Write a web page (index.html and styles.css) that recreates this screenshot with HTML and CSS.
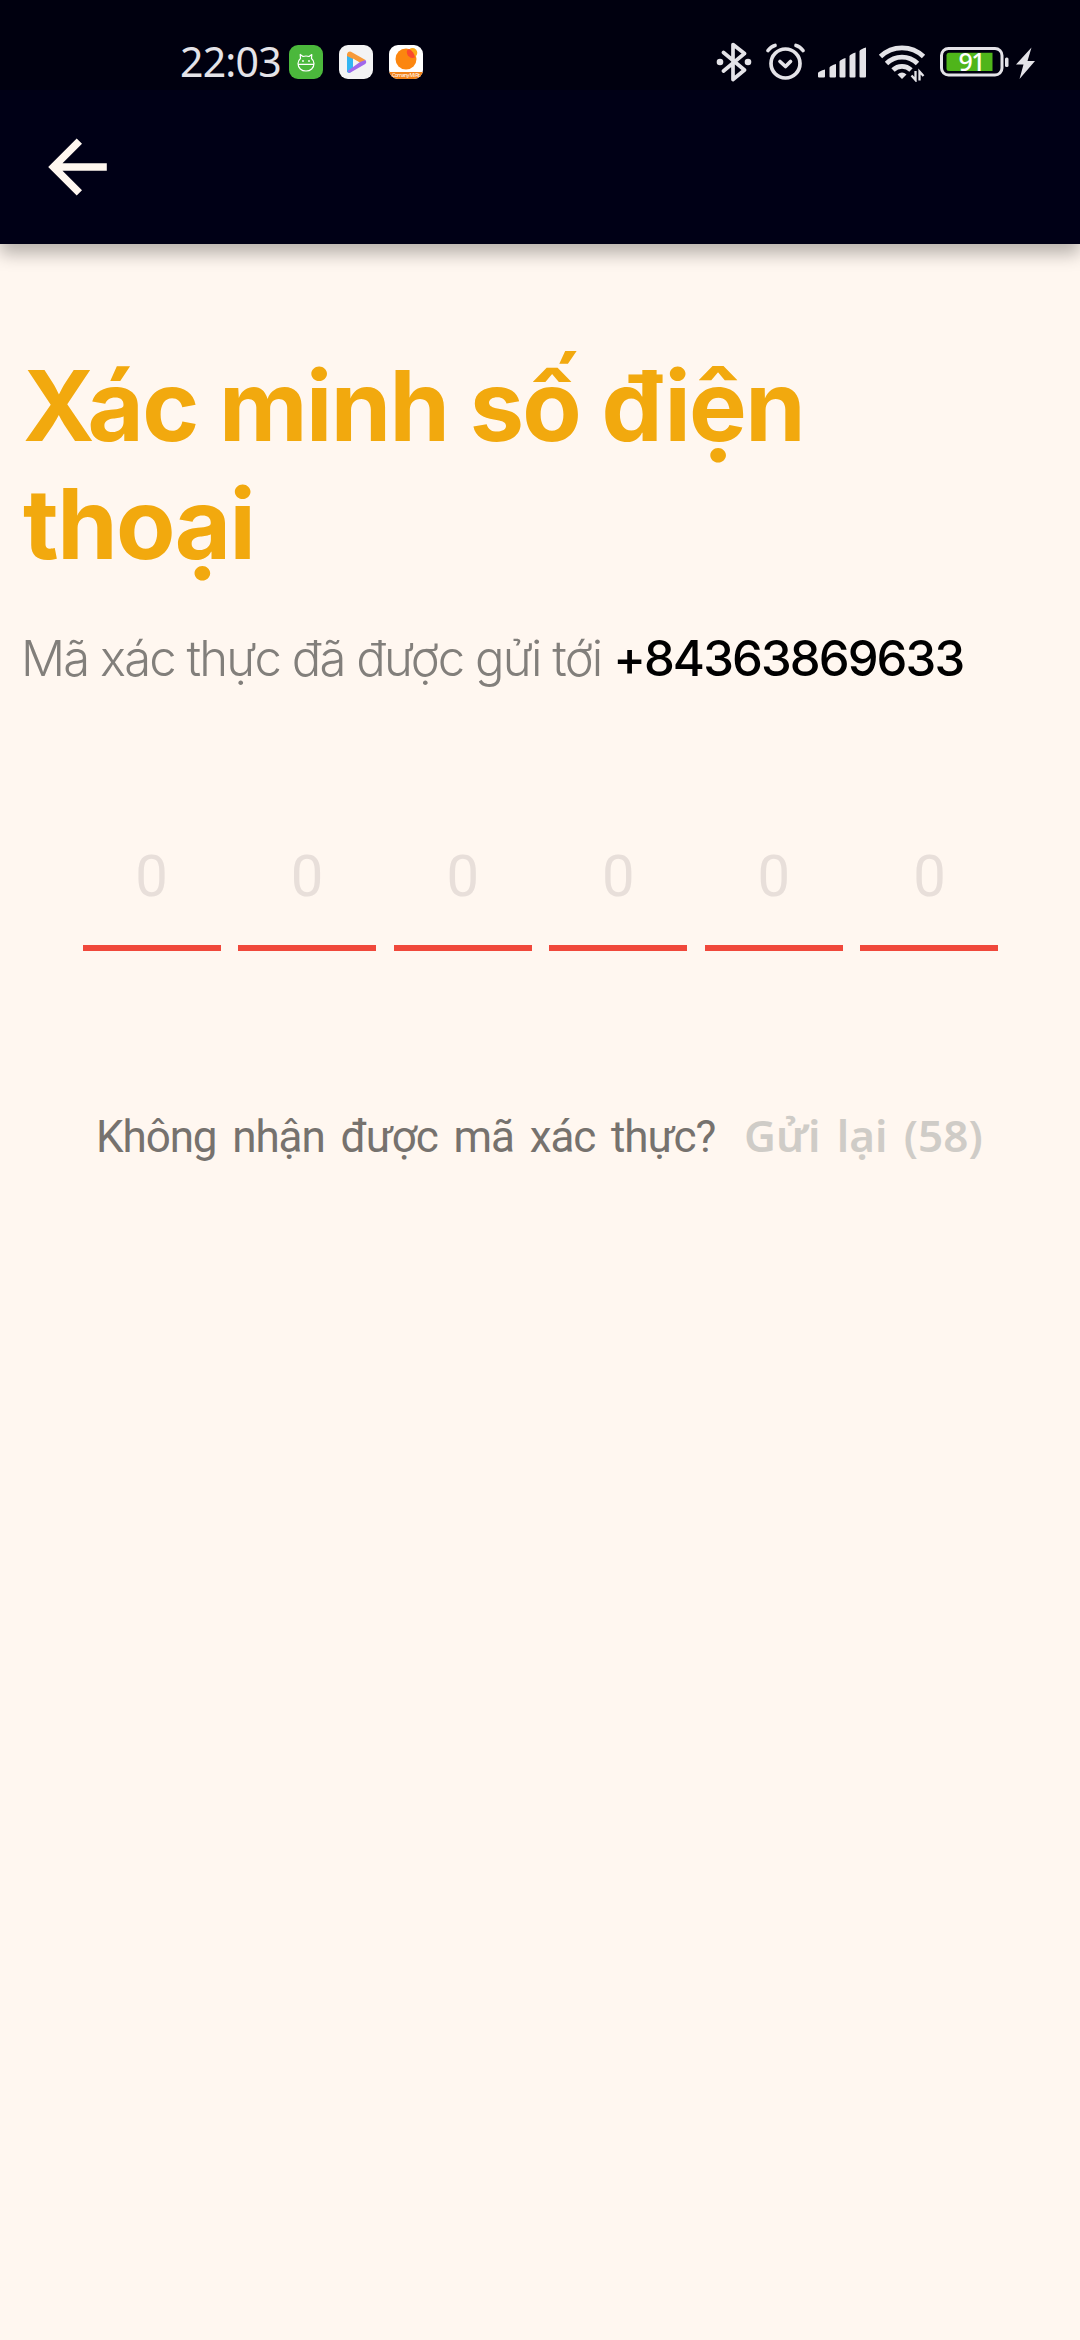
FILE: index.html
```html
<!DOCTYPE html>
<html lang="vi">
<head>
<meta charset="utf-8">
<title>Xác minh số điện thoại</title>
<link rel="stylesheet" href="styles.css">
</head>
<body>
<header class="header">
  <div class="status">
    <div class="status-left">
      <span class="clock">22:03</span>
      <svg class="app" viewBox="0 0 34 34"><rect width="34" height="34" rx="9" fill="#4bb83c"/><path d="M9 19.300h16M11.500 13.500c-1.600 1.300-2.500 3-2.500 5 0 4.500 3.500 7.500 8 7.500s8-3 8-7.500c0-2-.9-3.700-2.500-5l.3-4-2.800 2q-3-1-6 0l-2.800-2z" fill="none" stroke="#fff" stroke-width="1.200" stroke-linejoin="round"/><circle cx="14" cy="16" r=".9" fill="#fff"/><circle cx="20" cy="16" r=".9" fill="#fff"/></svg>
      <svg class="app" viewBox="0 0 34 34"><rect width="34" height="34" rx="9" fill="#f3f3f4"/><path d="M8 10.500L8 26.500q.5 2 3 1.300L14 25V12z" fill="#32b5f2"/><path d="M8 9q1-3 4-2.300L26.500 15 23 18.500 8 11z" fill="#f79a3a"/><path d="M27.300 17q0 1.500-1.500 2.300L11.500 27.500Q9 28 8.500 26l12.500-9 5.500-2z" fill="#a067ec"/><path d="M14 13.500v7l5.500-3.500z" fill="#f3f3f4"/></svg>
      <svg class="app" viewBox="0 0 34 34"><defs><clipPath id="tile"><rect width="34" height="34" rx="9"/></clipPath></defs><g clip-path="url(#tile)"><path d="M0 0h34v34H0z" fill="#fff"/><circle cx="17" cy="14" r="10.500" fill="#fc860f"/><circle cx="23.500" cy="7.800" r="4.800" fill="#fba817"/><path d="M18 5.500a6 6 0 0 0 8 7A11 11 0 0 0 20 4z" fill="#fb4a2d"/><path d="M0 27h34v7H0z" fill="#f28218"/></g><text x="3" y="32.300" font-size="5.300" textLength="28" class="tile-label">Comany Mi Fit</text></svg>
    </div>
    <svg class="status-icons" viewBox="0 0 324 40">
      <g fill="none" stroke="#e4e3e8" stroke-width="3.700" stroke-linejoin="round" stroke-linecap="round">
        <path d="M7.500 10.500L28.500 28 17 37.500V2.500L28.500 11.500 7.500 29"/>
        <circle cx="69.500" cy="21.500" r="14.500"/>
        <path d="M64 19.500l5.500 5 5-5"/>
        <path d="M52 8.500q3-4 7-5M80 3.500q4 1 7 5"/>
      </g>
      <circle cx="4" cy="20" r="3.300" fill="#e4e3e8"/><circle cx="32" cy="20" r="3.300" fill="#e4e3e8"/>
      <path d="M102 31q1-2 7-3.500v7q0 1-1 1h-5q-1 0-1-1zM113.500 25.500q1-2 6.500-3.500v12.500q0 1-1 1h-4.500q-1 0-1-1zM123.500 19.500q1-2 6-3.500v18.500q0 1-1 1h-4q-1 0-1-1zM133.500 14q1-2 6-3.500v24q0 1-1 1h-4q-1 0-1-1zM143.500 9q1-2 6.500-3.500v29q0 1-1 1h-4.500q-1 0-1-1z" fill="#e4e3e8"/>
      <g fill="none" stroke="#e4e3e8" stroke-width="4.800">
        <path d="M164.500 14.500a31 31 0 0 1 43 0M170.500 21.500a22 22 0 0 1 31 0M177 28a13 13 0 0 1 18 0"/>
      </g>
      <path d="M181.500 32.500q4.500-4 9 0l-4.500 4.500z" fill="#e4e3e8"/>
      <path d="M199.500 29v9l-4-4.500M203.500 38.500v-9l4 4.500" fill="none" stroke="#e4e3e8" stroke-width="2.300"/>
      <rect x="225.500" y="6.500" width="60.500" height="26.500" rx="7" fill="none" stroke="#e4e3e8" stroke-width="3"/>
      <path d="M233 10.800h43.500V29H233q-2.500 0-2.500-2.500V13.300q0-2.500 2.500-2.500z" fill="#4fb51a"/>
      <rect x="289" y="15.500" width="3.500" height="9.500" rx="1.500" fill="#e4e3e8"/>
      <text x="242.500" y="29" class="battery-label">91</text>
      <path d="M315.500 5.500L300 22.500h7.500l-4 14.500L319 19h-7.500z" fill="#e4e3e8"/>
    </svg>
  </div>
  <nav class="toolbar">
    <svg class="back" viewBox="0 0 60 60"><path d="M58.800 26.200v7.600H14.500L34 53.300 28.700 58.500.2 30 28.700 1.500 34 6.700 14.500 26.200z" fill="#fff7f0"/></svg>
  </nav>
</header>
<main class="content">
  <h1 class="title"><span class="title-line">Xác minh số điện</span> <span class="title-line">thoại</span></h1>
  <p class="sent"><span class="sent-text">Mã xác thực đã được gửi tới</span> <strong class="phone">+84363869633</strong></p>
  <div class="otp">
    <div class="cell">0</div><div class="cell">0</div><div class="cell">0</div><div class="cell">0</div><div class="cell">0</div><div class="cell">0</div>
  </div>
  <div class="resend">
    <span class="question">Không nhận được mã xác thực?</span>
    <span class="again">Gửi lại (58)</span>
  </div>
</main>
</body>
</html>
```
FILE: styles.css
```css
* { box-sizing: border-box; }
body {
  margin: 0;
  min-height: 2340px;
  background: #fff7f0;
  font-family: "Inter", "Liberation Sans", sans-serif;
  white-space: nowrap;
}
.header {
  height: 244px;
  background: #000016;
  box-shadow: 0 10px 16px rgba(0, 0, 0, .28);
}
.status {
  height: 90px;
  padding: 41px 40px 0 180px;
  display: flex;
  justify-content: space-between;
  align-items: flex-start;
  background: #00000f;
}
.status-left { display: flex; gap: 16px; padding-top: 4px; }
.clock {
  width: 93px;
  margin-top: -1px;
  font: 450 41px/34px "Noto Sans", sans-serif;
  letter-spacing: -.8px;
  color: #e4e3e8;
}
.app { width: 34px; height: 34px; display: block; }
.tile-label { font-family: "Noto Sans", sans-serif; fill: #fff; }
.status-icons { width: 324px; height: 40px; margin-top: 1px; display: block; }
.battery-label { font: 500 25px "Noto Sans", sans-serif; letter-spacing: -1.500px; fill: #fff; }
.toolbar { padding: 47px 48px; }
.back { width: 60px; height: 60px; display: block; }
.content { padding: 103px 23px 0; }
.title {
  margin: 0;
  color: #f2a90e;
  font-size: 97px;
  line-height: 118px;
  font-weight: 700;
  letter-spacing: -1.600px;
}
.title-line { display: block; }
.sent {
  margin: 46px 0 0 -2px;
  font-size: 49px;
  line-height: 60px;
  letter-spacing: -1.900px;
}
.sent-text { color: #827f7b; font-weight: 300; }
.phone { color: #000; font-weight: 500; }
.otp {
  width: 916px;
  margin: 132px 0 0 59.500px;
  display: grid;
  grid-template-columns: repeat(6, 1fr);
  column-gap: 17.500px;
}
.cell {
  height: 130px;
  border-bottom: 6px solid #f0483b;
  text-align: center;
  font: 400 58px/110px "Roboto", sans-serif;
  color: #e8dfda;
}
.resend {
  margin: 155px 0 0 73px;
  display: flex;
  gap: 29px;
  line-height: 60px;
}
.question {
  width: 619px;
  padding-top: 1px;
  font-family: "Roboto", sans-serif;
  font-size: 44px;
  letter-spacing: -1.100px;
  word-spacing: 6px;
  color: #76726e;
}
.again {
  margin-top: -1px;
  font-family: "Noto Sans", sans-serif;
  font-size: 44px;
  font-weight: 600;
  word-spacing: 5px;
  color: #cfccc7;
}
```
